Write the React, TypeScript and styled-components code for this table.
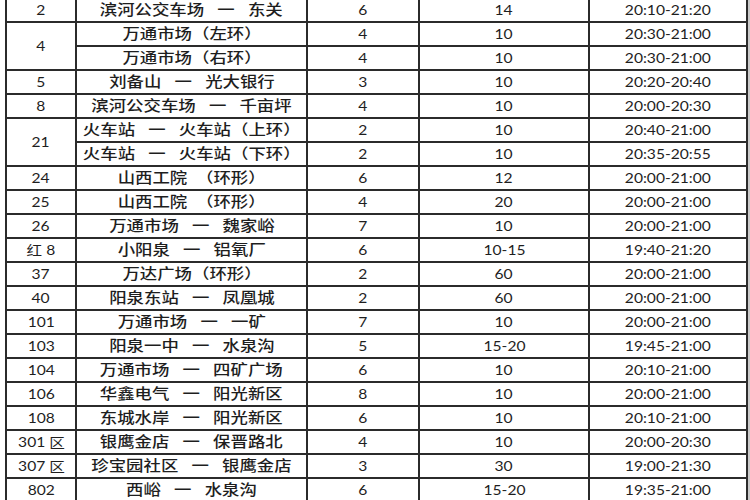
import React from "react";
import styled, { createGlobalStyle } from "styled-components";

const Global = createGlobalStyle`
  html, body { margin: 0; padding: 0; background: #ffffff; }
  body { width: 750px; height: 500px; overflow: hidden; }
`;

const Frame = styled.div`
  display: flex;
  width: 750px;
  height: 500px;
  overflow: hidden;
  padding-left: 5px;
  box-sizing: border-box;
`;

const Sheet = styled.div`
  flex: 1;
  margin-top: -3px;
`;

const Edge = styled.div`
  width: 3px;
  background: #c9c9c9;
`;

const Table = styled.table`
  border-collapse: collapse;
  table-layout: fixed;
  width: 741px;
  color: #1e1e1e;
`;

const Row = styled.tr`
  height: 24px;
`;

const Cell = styled.td<{ $cjk?: boolean }>`
  border: 2px solid #2b2b2b;
  padding: 0;
  text-align: center;
  vertical-align: middle;
  white-space: pre;
  overflow: hidden;
  font-family: "Lato", "Noto Sans CJK SC", sans-serif;
  font-size: ${(p) => (p.$cjk ? "14.5px" : "13px")};
  font-weight: ${(p) => (p.$cjk ? 500 : 400)};
  line-height: 20px;
`;

const Stretch = styled.span`
  display: inline-block;
  transform: scaleX(1.2);
`;

type Sub = { route: string; n: string; f: string; t: string };
type Line = { no: string; subs: Sub[] };

const D = "   一   ";

const lines: Line[] = [
  { no: "2", subs: [{ route: `滨河公交车场${D}东关`, n: "6", f: "14", t: "20:10-21:20" }] },
  {
    no: "4",
    subs: [
      { route: "万通市场（左环）", n: "4", f: "10", t: "20:30-21:00" },
      { route: "万通市场（右环）", n: "4", f: "10", t: "20:30-21:00" },
    ],
  },
  { no: "5", subs: [{ route: `刘备山${D}光大银行`, n: "3", f: "10", t: "20:20-20:40" }] },
  { no: "8", subs: [{ route: `滨河公交车场${D}千亩坪`, n: "4", f: "10", t: "20:00-20:30" }] },
  {
    no: "21",
    subs: [
      { route: `火车站${D}火车站（上环）`, n: "2", f: "10", t: "20:40-21:00" },
      { route: `火车站${D}火车站（下环）`, n: "2", f: "10", t: "20:35-20:55" },
    ],
  },
  { no: "24", subs: [{ route: "山西工院  （环形）", n: "6", f: "12", t: "20:00-21:00" }] },
  { no: "25", subs: [{ route: "山西工院  （环形）", n: "4", f: "20", t: "20:00-21:00" }] },
  { no: "26", subs: [{ route: `万通市场${D}魏家峪`, n: "7", f: "10", t: "20:00-21:00" }] },
  { no: "红 8", subs: [{ route: `小阳泉${D}铝氧厂`, n: "6", f: "10-15", t: "19:40-21:20" }] },
  { no: "37", subs: [{ route: "万达广场（环形）", n: "2", f: "60", t: "20:00-21:00" }] },
  { no: "40", subs: [{ route: `阳泉东站${D}凤凰城`, n: "2", f: "60", t: "20:00-21:00" }] },
  { no: "101", subs: [{ route: `万通市场${D}一矿`, n: "7", f: "10", t: "20:00-21:00" }] },
  { no: "103", subs: [{ route: `阳泉一中${D}水泉沟`, n: "5", f: "15-20", t: "19:45-21:00" }] },
  { no: "104", subs: [{ route: `万通市场${D}四矿广场`, n: "6", f: "10", t: "20:10-21:00" }] },
  { no: "106", subs: [{ route: `华鑫电气${D}阳光新区`, n: "8", f: "10", t: "20:00-21:00" }] },
  { no: "108", subs: [{ route: `东城水岸${D}阳光新区`, n: "6", f: "10", t: "20:10-21:00" }] },
  { no: "301 区", subs: [{ route: `银鹰金店${D}保晋路北`, n: "4", f: "10", t: "20:00-20:30" }] },
  { no: "307 区", subs: [{ route: `珍宝园社区${D}银鹰金店`, n: "3", f: "30", t: "19:00-21:30" }] },
  { no: "802", subs: [{ route: `西峪${D}水泉沟`, n: "6", f: "15-20", t: "19:35-21:00" }] },
];

const T = ({ children }: { children: React.ReactNode }) => <Stretch>{children}</Stretch>;

export default function App() {
  return (
    <>
      <Global />
      <Frame>
        <Sheet>
          <Table>
            <colgroup>
              <col style={{ width: 70 }} />
              <col style={{ width: 231 }} />
              <col style={{ width: 112 }} />
              <col style={{ width: 170 }} />
              <col style={{ width: 158 }} />
            </colgroup>
            <tbody>
              {lines.map((l) =>
                l.subs.map((s, i) => (
                  <Row key={l.no + i}>
                    {i === 0 && (
                      <Cell rowSpan={l.subs.length}>
                        <T>{l.no}</T>
                      </Cell>
                    )}
                    <Cell $cjk>
                      <T>{s.route}</T>
                    </Cell>
                    <Cell>
                      <T>{s.n}</T>
                    </Cell>
                    <Cell>
                      <T>{s.f}</T>
                    </Cell>
                    <Cell>
                      <T>{s.t}</T>
                    </Cell>
                  </Row>
                ))
              )}
            </tbody>
          </Table>
        </Sheet>
        <Edge />
      </Frame>
    </>
  );
}
